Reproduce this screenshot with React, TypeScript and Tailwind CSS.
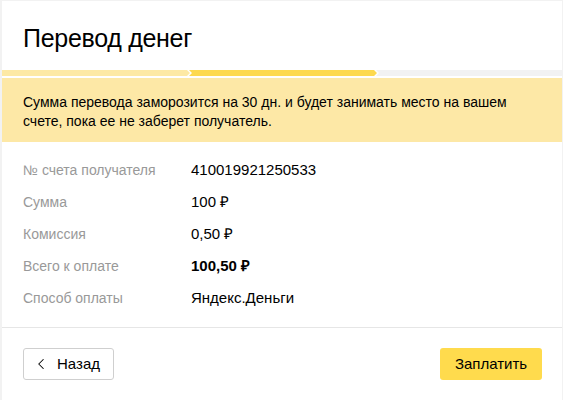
import { ChevronLeft } from "lucide-react";

const rows: { label: string; value: string; bold?: boolean }[] = [
  { label: "№ счета получателя", value: "410019921250533" },
  { label: "Сумма", value: "100 ₽" },
  { label: "Комиссия", value: "0,50 ₽" },
  { label: "Всего к оплате", value: "100,50 ₽", bold: true },
  { label: "Способ оплаты", value: "Яндекс.Деньги" },
];

export default function App() {
  return (
    <div
      className="min-h-[400px] bg-[#f2f2f2] pl-[2px] pr-[1px] pt-[1px] text-black"
      style={{ fontFamily: '"Liberation Sans", Arial, sans-serif' }}
    >
      <div className="flex min-h-[399px] flex-col bg-white">
        <header className="px-[21px] pt-[23px] pb-[18px]">
          <h1 className="text-[25px] leading-[28px] tracking-[-0.3px]">Перевод денег</h1>
        </header>

        <div className="flex h-[6px]">
          <div className="w-[188px] bg-[#fde9a5] [clip-path:polygon(0_0,calc(100%_-_3px)_0,100%_50%,calc(100%_-_3px)_100%,0_100%)]" />
          <div className="-ml-[1px] w-[188px] bg-[#fdd94f] [clip-path:polygon(0_0,calc(100%_-_3px)_0,100%_50%,calc(100%_-_3px)_100%,0_100%,3px_50%)]" />
          <div className="-ml-[1px] flex-1 bg-[#f2f2f2] [clip-path:polygon(0_0,100%_0,100%_100%,0_100%,3px_50%)]" />
        </div>

        <div className="mt-[2px] h-[64px] bg-[#fde8a6] px-[21px] pt-[15px] text-[14px] leading-[19px]">
          Сумма перевода заморозится на 30 дн. и будет занимать место на вашем
          <br />
          счете, пока ее не заберет получатель.
        </div>

        <dl className="flex flex-col px-[21px] pt-[12px] pb-[13px] text-[14px]">
          {rows.map((r) => (
            <div key={r.label} className="flex h-[32px] items-center">
              <dt className="w-[168px] shrink-0 text-[#999]">{r.label}</dt>
              <dd className={r.bold ? "text-[15px] font-bold" : "text-[15px]"}>{r.value}</dd>
            </div>
          ))}
        </dl>

        <div className="flex items-center justify-between border-t border-[#e6e6e6] pl-[21px] pr-[20px] pt-[20px] pb-[19px] text-[15px]">
          <button className="flex h-[32px] w-[91px] items-center gap-[7px] rounded-[3px] border border-[#cfcfcf] pl-[8px]">
            <ChevronLeft className="size-[18px]" strokeWidth={1.4} />
            <span>Назад</span>
          </button>
          <button className="h-[32px] w-[102px] rounded-[3px] bg-[#ffdb4d]">Заплатить</button>
        </div>
      </div>
    </div>
  );
}
